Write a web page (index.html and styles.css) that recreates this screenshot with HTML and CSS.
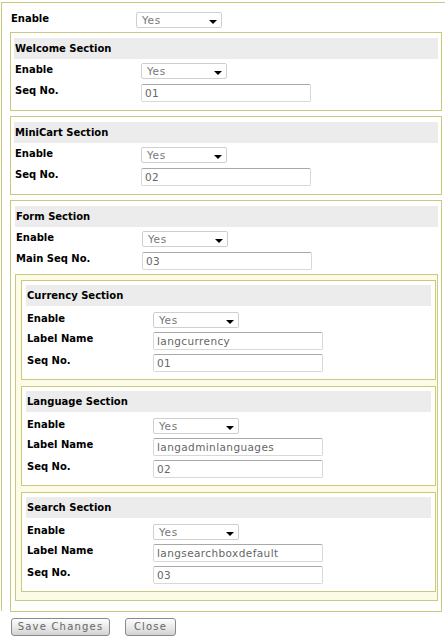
FILE: index.html
```html
<!DOCTYPE html>
<html>
<head>
<meta charset="utf-8">
<link rel="stylesheet" href="styles.css">
</head>
<body>
<div class="page">
  <div class="outer">
    <div class="row top-row">
      <span class="lbl">Enable</span>
      <span class="sel">Yes<i class="arr"></i></span>
    </div>

    <div class="sec">
      <div class="band">Welcome Section</div>
      <div class="row r-sel"><span class="lbl">Enable</span><span class="sel">Yes<i class="arr"></i></span></div>
      <div class="row r-inp"><span class="lbl">Seq No.</span><span class="inp">01</span></div>
    </div>

    <div class="sec">
      <div class="band">MiniCart Section</div>
      <div class="row r-sel"><span class="lbl">Enable</span><span class="sel">Yes<i class="arr"></i></span></div>
      <div class="row r-inp"><span class="lbl">Seq No.</span><span class="inp">02</span></div>
    </div>

    <div class="sec form-sec">
      <div class="band">Form Section</div>
      <div class="row r-sel"><span class="lbl">Enable</span><span class="sel">Yes<i class="arr"></i></span></div>
      <div class="row r-inp"><span class="lbl">Main Seq No.</span><span class="inp">03</span></div>

      <div class="nest">
        <div class="isec">
          <div class="band">Currency Section</div>
          <div class="row r-sel"><span class="lbl">Enable</span><span class="sel">Yes<i class="arr"></i></span></div>
          <div class="row r-inp1"><span class="lbl">Label Name</span><span class="inp">langcurrency</span></div>
          <div class="row r-inp2"><span class="lbl">Seq No.</span><span class="inp">01</span></div>
        </div>
        <div class="isec">
          <div class="band">Language Section</div>
          <div class="row r-sel"><span class="lbl">Enable</span><span class="sel">Yes<i class="arr"></i></span></div>
          <div class="row r-inp1"><span class="lbl">Label Name</span><span class="inp">langadminlanguages</span></div>
          <div class="row r-inp2"><span class="lbl">Seq No.</span><span class="inp">02</span></div>
        </div>
        <div class="isec">
          <div class="band">Search Section</div>
          <div class="row r-sel"><span class="lbl">Enable</span><span class="sel">Yes<i class="arr"></i></span></div>
          <div class="row r-inp1"><span class="lbl">Label Name</span><span class="inp">langsearchboxdefault</span></div>
          <div class="row r-inp2"><span class="lbl">Seq No.</span><span class="inp">03</span></div>
        </div>
      </div>
    </div>
  </div>

  <div class="buttons">
    <span class="btn save">Save Changes</span>
    <span class="btn close">Close</span>
  </div>
</div>
</body>
</html>
```

FILE: styles.css
```css
html, body {
  margin: 0;
  padding: 0;
  background: #ffffff;
  overflow: hidden;
}
body {
  font-family: "DejaVu Sans", Verdana, sans-serif;
  font-size: 10.5px;
  color: #000;
}
.page {
  width: 445px;
  height: 637px;
  border-bottom: 1px solid #f2f2f2;
  box-sizing: border-box;
}
.outer {
  margin: 2px 0 0 1px;
  width: 460px;
  border-left: 1px solid #cbc97c;
  border-top: 1px solid #cbc97c;
  padding: 0 0 0 8px;
  height: 609px;
  box-sizing: border-box;
}
.row {
  display: flex;
  align-items: flex-start;
}
.lbl {
  font-weight: bold;
  font-size: 10px;
  width: 126px;
  flex: none;
  line-height: 14px;
  padding-left: 1px;
}
.top-row {
  padding-top: 9px;
  height: 16px;
  margin-bottom: 4px;
}
.top-row .lbl {
  width: 125px;
}
.sel {
  position: relative;
  width: 86px;
  height: 16px;
  box-sizing: border-box;
  border: 1px solid #cfcfcf;
  border-radius: 2px;
  color: #777;
  padding-left: 5px;
  line-height: 14px;
  letter-spacing: 0.6px;
  background: #fff;
}
.arr {
  position: absolute;
  right: 4px;
  bottom: 3px;
  width: 0;
  height: 0;
  border-left: 4px solid transparent;
  border-right: 4px solid transparent;
  border-top: 4px solid #000;
}
.inp {
  width: 170px;
  height: 18px;
  box-sizing: border-box;
  border: 1px solid #d8d8d8;
  border-top-color: #a8a8a8;
  border-radius: 2px;
  color: #666;
  padding-left: 3px;
  line-height: 16px;
  letter-spacing: 0.4px;
  background: #fff;
}
.sec {
  width: 432px;
  box-sizing: border-box;
  border: 1px solid #cbc97c;
  padding: 5px 3px 8px 3px;
  margin-bottom: 5px;
  background: #fff;
}
.band {
  background: #ececec;
  height: 21px;
  line-height: 21px;
  font-weight: bold;
  font-size: 10px;
  padding-left: 1px;
  margin-bottom: 4px;
}
.sec .r-sel {
  height: 16px;
  margin-bottom: 5px;
}
.sec .r-inp {
  height: 18px;
}
.form-sec {
  padding: 5px 3px 10px 4px;
}
.form-sec > .r-inp {
  margin-bottom: 4px;
}
.nest {
  border: 1px solid #cbc97c;
  background: #fbfbe6;
  padding: 5px 1px 8px 5px;
}
.isec {
  border: 1px solid #cbc97c;
  background: #fff;
  padding: 4px 4px 7px 4px;
  margin-bottom: 6px;
}
.isec:last-child {
  margin-bottom: 0;
}
.isec .band {
  margin-bottom: 6px;
}
.isec .r-sel {
  height: 16px;
  margin-bottom: 4px;
}
.isec .r-inp1 {
  height: 18px;
  margin-bottom: 4px;
}
.isec .r-inp2 {
  height: 18px;
}
.buttons {
  display: flex;
  gap: 15px;
  padding: 7px 0 0 11px;
}
.btn {
  height: 18px;
  box-sizing: border-box;
  border: 1px solid #8a8a8a;
  border-radius: 3px;
  background: linear-gradient(#fdfdfd, #e6e6e6 60%, #d2d2d2);
  color: #666;
  font-size: 10px;
  line-height: 16px;
  letter-spacing: 1.2px;
  text-align: center;
}
.save { width: 99px; }
.close { width: 51px; }
```
